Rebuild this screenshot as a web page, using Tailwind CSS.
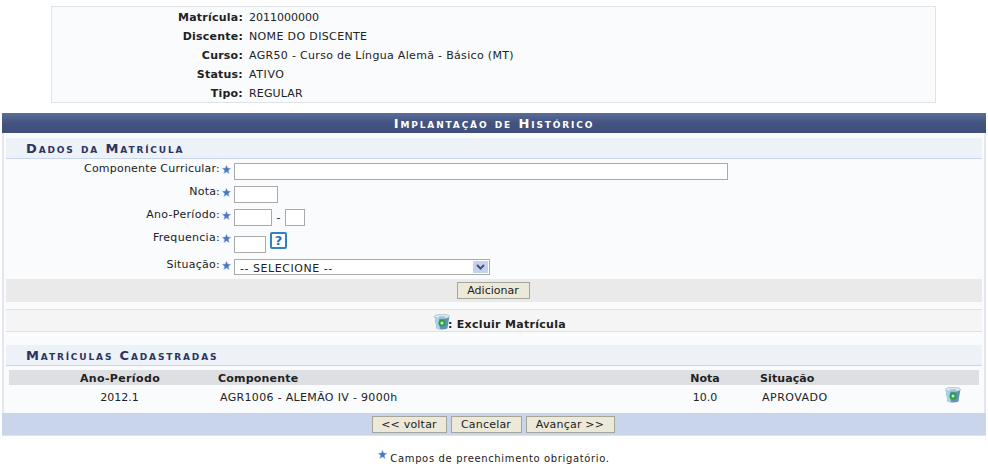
<!DOCTYPE html>
<html lang="pt">
<head>
  <meta charset="UTF-8" />
  <title>Implantação de Histórico</title>
  <script src="https://cdn.jsdelivr.net/npm/@tailwindcss/browser@4"></script>
</head>
<body class="bg-white font-['DejaVu_Sans',sans-serif] text-[11px] leading-[14px] text-[#222] w-[988px] h-[469px] overflow-hidden">
  <svg class="hidden">
    <symbol id="star" viewBox="0 0 10 10"><path d="M5 .3 6.4 3.4 9.8 3.7 7.2 6 8 9.5 5 7.7 2 9.5 2.8 6 .2 3.7 3.6 3.4Z" fill="#4a76c4" stroke="#a9bfe6" stroke-width=".6"/></symbol>
    <symbol id="trash" viewBox="0 0 16 16">
      <path d="M.6 2.5 2.6 14.5Q8 16.5 13.4 14.5L15.4 2.5Z" fill="#5f93b8"/>
      <path d="M.6 2.5 2.6 14.5Q4.5 15.4 6 15.5L5 4Z" fill="#a8d4ea"/>
      <ellipse cx="8" cy="2.4" rx="7.6" ry="2.1" fill="#dcebf2" stroke="#8fb2c6" stroke-width=".6"/>
      <path d="M5 3 11 3" stroke="#7fa6bd" stroke-width="1"/>
      <circle cx="8" cy="9" r="3.6" fill="#2f9e44"/>
      <circle cx="8" cy="9" r="1.5" fill="#c9efc9"/>
    </symbol>
  </svg>

  <div class="pt-[6px] pl-[51px]">
    <div class="w-[885px] h-[97px] box-border border border-[#dfe3ea] bg-[#f9fbfd] pt-[1px] grid grid-cols-[191px_1fr] auto-rows-[19px] items-center">
      <b class="text-right tracking-[0.22px]">Matrícula:</b><span class="pl-[6px]">2011000000</span>
      <b class="text-right tracking-[0.22px]">Discente:</b><span class="pl-[6px] tracking-[0.36px]">NOME DO DISCENTE</span>
      <b class="text-right tracking-[0.22px]">Curso:</b><span class="pl-[6px] tracking-[0.32px]">AGR50 - Curso de Língua Alemã - Básico (MT)</span>
      <b class="text-right tracking-[0.22px]">Status:</b><span class="pl-[6px] tracking-[0.6px]">ATIVO</span>
      <b class="text-right tracking-[0.22px]">Tipo:</b><span class="pl-[6px] tracking-[0.15px]">REGULAR</span>
    </div>
  </div>

  <div class="mt-[10px] ml-[2px] w-[984px]">
    <div class="h-[20px] bg-gradient-to-b from-[#5a6c9b] via-[#43537f] to-[#3f4f7c] text-center text-white font-bold text-[13px] leading-[22px] tracking-[1.85px] [font-variant:small-caps]">Implantação de Histórico</div>

    <div class="border-x-2 border-[#e4e7ee] bg-[#f9fbfd] px-[2px] pt-[5px]">
      <div class="h-[21px] box-border bg-[#edf1f8] border-b border-[#c8d5ec] pl-[20px] text-[#2b3560] font-bold text-[13px] leading-[22px] tracking-[1.85px] [font-variant:small-caps]">Dados da Matrícula</div>

      <div class="pt-[4px] flex flex-col">
        <div class="flex h-[23px]">
          <label class="w-[214px] text-right -mt-[1px] tracking-[0.2px]">Componente Curricular:</label>
          <svg class="w-[9px] h-[9px] ml-[2px] mt-[2px]"><use href="#star"/></svg>
          <input type="text" class="ml-[3px] w-[494px] h-[17px] box-border border border-[#aaa] bg-white" />
        </div>
        <div class="flex h-[23px]">
          <label class="w-[214px] text-right -mt-[1px] tracking-[0.2px]">Nota:</label>
          <svg class="w-[9px] h-[9px] ml-[2px] mt-[2px]"><use href="#star"/></svg>
          <input type="text" class="ml-[3px] w-[44px] h-[17px] box-border border border-[#aaa] bg-white" />
        </div>
        <div class="flex h-[23px]">
          <label class="w-[214px] text-right -mt-[1px] tracking-[0.3px]">Ano-Período:</label>
          <svg class="w-[9px] h-[9px] ml-[2px] mt-[2px]"><use href="#star"/></svg>
          <input type="text" class="ml-[3px] w-[38px] h-[17px] box-border border border-[#aaa] bg-white" />
          <span class="w-[13px] text-center pt-[2px]">-</span>
          <input type="text" class="w-[20px] h-[17px] box-border border border-[#aaa] bg-white" />
        </div>
        <div class="flex h-[27px]">
          <label class="w-[214px] text-right -mt-[1px] tracking-[0.3px]">Frequencia:</label>
          <svg class="w-[9px] h-[9px] ml-[2px] mt-[2px]"><use href="#star"/></svg>
          <input type="text" class="ml-[3px] mt-[4px] w-[32px] h-[17px] box-border border border-[#aaa] bg-white" />
          <span class="ml-[4px] w-[17px] h-[17px] box-border border-2 border-[#2f7fc9] rounded-[2px] bg-white text-[#1f6fbf] font-bold text-[13px] leading-[13px] text-center">?</span>
        </div>
        <div class="flex h-[20px]">
          <label class="w-[214px] text-right -mt-[1px] tracking-[0.25px]">Situação:</label>
          <svg class="w-[9px] h-[9px] ml-[2px] mt-[2px]"><use href="#star"/></svg>
          <div class="relative ml-[3px] w-[256px] h-[16px]">
            <select class="appearance-none w-full h-full box-border border border-[#aaa] bg-white pl-[5px] pt-[3px] text-[11px] leading-[12px] tracking-[0.55px] text-[#222]">
              <option>-- SELECIONE --</option>
            </select>
            <svg class="absolute right-[2px] top-[2px] w-[15px] h-[12px]" viewBox="0 0 15 12"><rect width="15" height="12" rx="1" fill="#c3d2ef"/><path d="M4 4 7.5 7.5 11 4" fill="none" stroke="#41557f" stroke-width="2"/></svg>
          </div>
        </div>
        <div class="h-[23px] bg-[#eaeaea] flex justify-center items-center pr-[2px]">
          <button class="w-[73px] h-[17px] box-border border border-[#a5a59a] bg-[#ece9d8] text-[11px] leading-[13px]">Adicionar</button>
        </div>
      </div>

      <div class="mt-[7px] h-[23px] box-border bg-[#f5f5f5] border-y border-[#dfe1e4] flex items-center justify-center pl-[12px] font-bold">
        <svg class="w-[16px] h-[16px] mt-[2px] -mr-[2px]"><use href="#trash"/></svg>
        <span class="tracking-[0.3px] pt-[8px]">: Excluir Matrícula</span>
      </div>

      <div class="mt-[13px] h-[21px] box-border bg-[#edf1f8] border-b border-[#c8d5ec] pl-[20px] text-[#2b3560] font-bold text-[13px] leading-[22px] tracking-[1.85px] [font-variant:small-caps]">Matrículas Cadastradas</div>

      <div class="pt-[4px] px-[3px]">
        <table class="table-fixed border-collapse w-[970px]">
          <colgroup><col class="w-[209px]" /><col class="w-[470px]" /><col class="w-[34px]" /><col class="w-[208px]" /><col class="w-[49px]" /></colgroup>
          <thead class="leading-[13px]">
            <tr class="h-[15px] bg-[#dedfe3] font-bold">
              <th class="pl-[13px] pt-[2px] text-center font-bold tracking-[0.36px]">Ano-Período</th>
              <th class="pt-[2px] text-left font-bold tracking-[0.2px]">Componente</th>
              <th class="pt-[2px] text-center font-bold">Nota</th>
              <th class="pt-[2px] text-left font-bold pl-[38px] tracking-[0.1px]">Situação</th>
              <th></th>
            </tr>
          </thead>
          <tbody>
            <tr class="h-[28px]">
              <td class="pl-[12px] text-center pb-[2px]">2012.1</td>
              <td class="pl-[2px] pb-[2px] tracking-[0.33px]">AGR1006 - ALEMÃO IV - 9000h</td>
              <td class="text-center pb-[2px]">10.0</td>
              <td class="pl-[40px] pb-[2px] tracking-[0.5px]">APROVADO</td>
              <td class="pl-[15px]"><svg class="w-[16px] h-[16px] mb-[8px]"><use href="#trash"/></svg></td>
            </tr>
          </tbody>
        </table>
      </div>
    </div>

    <div class="h-[23px] box-border bg-[#c8d5eb] border-b border-[#dfe3ea] flex justify-center items-center gap-[4px] pr-[2px]">
      <button class="w-[75px] h-[17px] box-border border border-[#a5a59a] bg-[#ece9d8] text-[11px] leading-[13px] tracking-[0.2px]">&lt;&lt; voltar</button>
      <button class="w-[71px] h-[17px] box-border border border-[#a5a59a] bg-[#ece9d8] text-[11px] leading-[13px] tracking-[0.2px]">Cancelar</button>
      <button class="w-[89px] h-[17px] box-border border border-[#a5a59a] bg-[#ece9d8] text-[11px] leading-[13px] tracking-[0.2px]">Avançar &gt;&gt;</button>
    </div>
  </div>

  <div class="mt-[14px] flex justify-center items-start gap-[3px] text-[10px] leading-[14px] tracking-[0.64px]">
    <svg class="w-[9px] h-[9px]"><use href="#star"/></svg>
    <span class="pt-[2px]">Campos de preenchimento obrigatório.</span>
  </div>
</body>
</html>
